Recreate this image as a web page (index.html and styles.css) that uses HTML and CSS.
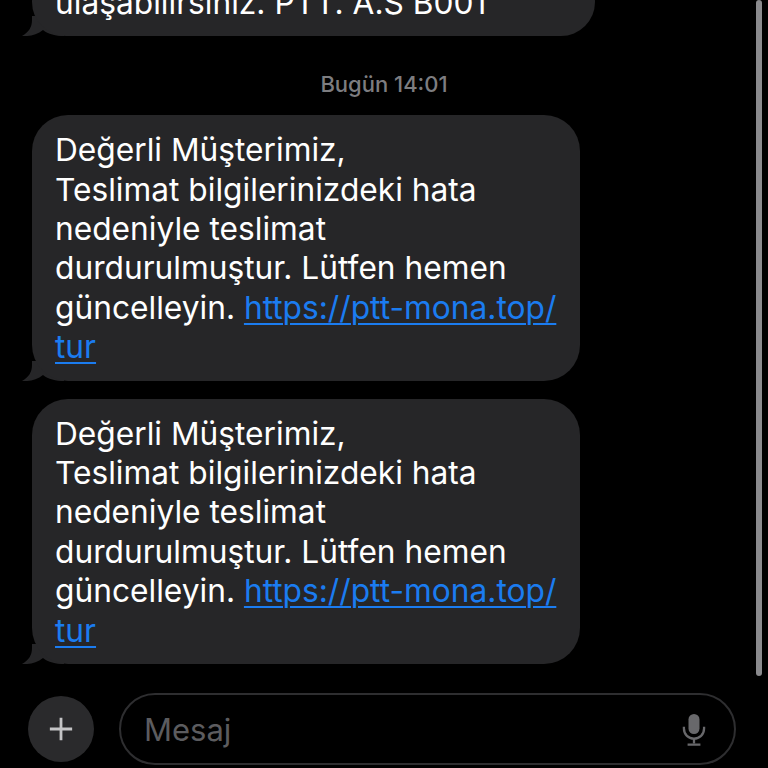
FILE: index.html
```html
<!DOCTYPE html>
<html lang="tr">
  <head>
    <meta charset="UTF-8" />
    <meta name="viewport" content="width=device-width, initial-scale=1.0" />
    <title>Mesajlar</title>
    <link rel="stylesheet" href="styles.css">
  </head>
  <body>
    <main class="chat">
      <section class="messages">
        <div class="bubble bubble-old">
          ulaşabilirsiniz. PTT. A.S B001
          <svg class="tail" viewBox="0 0 44 20"><path d="M12 0V4C12 11 9 16 2 20C9 20.500 17 19 23 14C28 18 36 20 44 20V0Z" /></svg>
        </div>
        <p class="stamp">Bugün 14:01</p>
        <div class="bubble">
          Değerli Müşterimiz,<br />
          Teslimat bilgilerinizdeki hata nedeniyle teslimat durdurulmuştur. Lütfen hemen güncelleyin.
          <a href="#">https://ptt-mona.top/</a><br /><a href="#">tur</a>
          <svg class="tail" viewBox="0 0 44 20"><path d="M12 0V4C12 11 9 16 2 20C9 20.500 17 19 23 14C28 18 36 20 44 20V0Z" /></svg>
        </div>
        <div class="bubble">
          Değerli Müşterimiz,<br />
          Teslimat bilgilerinizdeki hata nedeniyle teslimat durdurulmuştur. Lütfen hemen güncelleyin.
          <a href="#">https://ptt-mona.top/</a><br /><a href="#">tur</a>
          <svg class="tail" viewBox="0 0 44 20"><path d="M12 0V4C12 11 9 16 2 20C9 20.500 17 19 23 14C28 18 36 20 44 20V0Z" /></svg>
        </div>
      </section>
      <footer class="composer">
        <button class="plus" aria-label="Ekle">
          <svg viewBox="0 0 28 28"><path d="M14 2V26M2 14H26" /></svg>
        </button>
        <div class="field">
          <span class="placeholder">Mesaj</span>
          <svg class="mic" viewBox="0 0 26 36">
            <rect class="mic-head" x="7" y="1" width="12" height="22" rx="6" />
            <path class="mic-stand" d="M2 15V17C2 23.500 7 28 13 28C19 28 24 23.500 24 17V15M13 28V33M6 34.500H20" />
          </svg>
        </div>
      </footer>
      <div class="scrollbar"></div>
    </main>
  </body>
</html>
```

FILE: styles.css
```css
* {
  margin: 0;
  box-sizing: border-box;
}

body {
  background: #000;
  font-family: Inter, "Liberation Sans", sans-serif;
  overflow: hidden;
}

.chat {
  height: 768px;
  display: flex;
  flex-direction: column;
  position: relative;
}

.messages {
  height: 664px;
  padding-left: 32px;
  display: flex;
  flex-direction: column;
  justify-content: flex-end;
  align-items: flex-start;
  overflow: hidden;
}

.bubble {
  position: relative;
  width: 548px;
  padding: 15px 18px 14px 23px;
  background: #262628;
  border-radius: 36px;
  color: #fff;
  font-size: 31.7px;
  line-height: 39.4px;
  flex-shrink: 0;
  margin-bottom: 18px;
}

.bubble:last-child {
  margin-bottom: 0;
}

.bubble-old {
  width: 563px;
  margin-bottom: 0;
}

.bubble a {
  color: #1b7cf0;
  text-decoration: underline;
  text-decoration-thickness: 2px;
  text-underline-offset: 4px;
}

.tail {
  position: absolute;
  left: -12px;
  bottom: 0;
  z-index: -1;
  width: 44px;
  height: 20px;
  fill: #262628;
}

.stamp {
  width: 704px;
  margin: 36px 0 19px;
  text-align: center;
  color: #7d7d80;
  font-size: 22px;
  font-weight: 500;
  line-height: 24px;
}

.composer {
  flex: 1;
  display: flex;
  align-items: flex-start;
  gap: 25px;
  padding: 29px 32px 0 28px;
}

.plus {
  width: 66px;
  height: 66px;
  margin-top: 3px;
  flex-shrink: 0;
  display: flex;
  align-items: center;
  justify-content: center;
  border: none;
  border-radius: 50%;
  background: #2a2a2c;
}

.plus svg {
  width: 26px;
  height: 26px;
  fill: none;
  stroke: #c4c4c6;
  stroke-width: 3;
}

.field {
  flex: 1;
  height: 72px;
  display: flex;
  align-items: center;
  justify-content: space-between;
  padding: 0 28px 0 23px;
  border: 2px solid #2e2e30;
  border-radius: 36px;
}

.placeholder {
  color: #5c5c5f;
  font-size: 31px;
}

.mic {
  width: 24px;
  height: 33px;
}

.mic-head {
  fill: #68686b;
}

.mic-stand {
  fill: none;
  stroke: #68686b;
  stroke-width: 2.500;
}

.scrollbar {
  position: absolute;
  top: 0;
  right: 6px;
  width: 6px;
  height: 676px;
  border-radius: 3px;
  background: #8a8a8d;
}
```
